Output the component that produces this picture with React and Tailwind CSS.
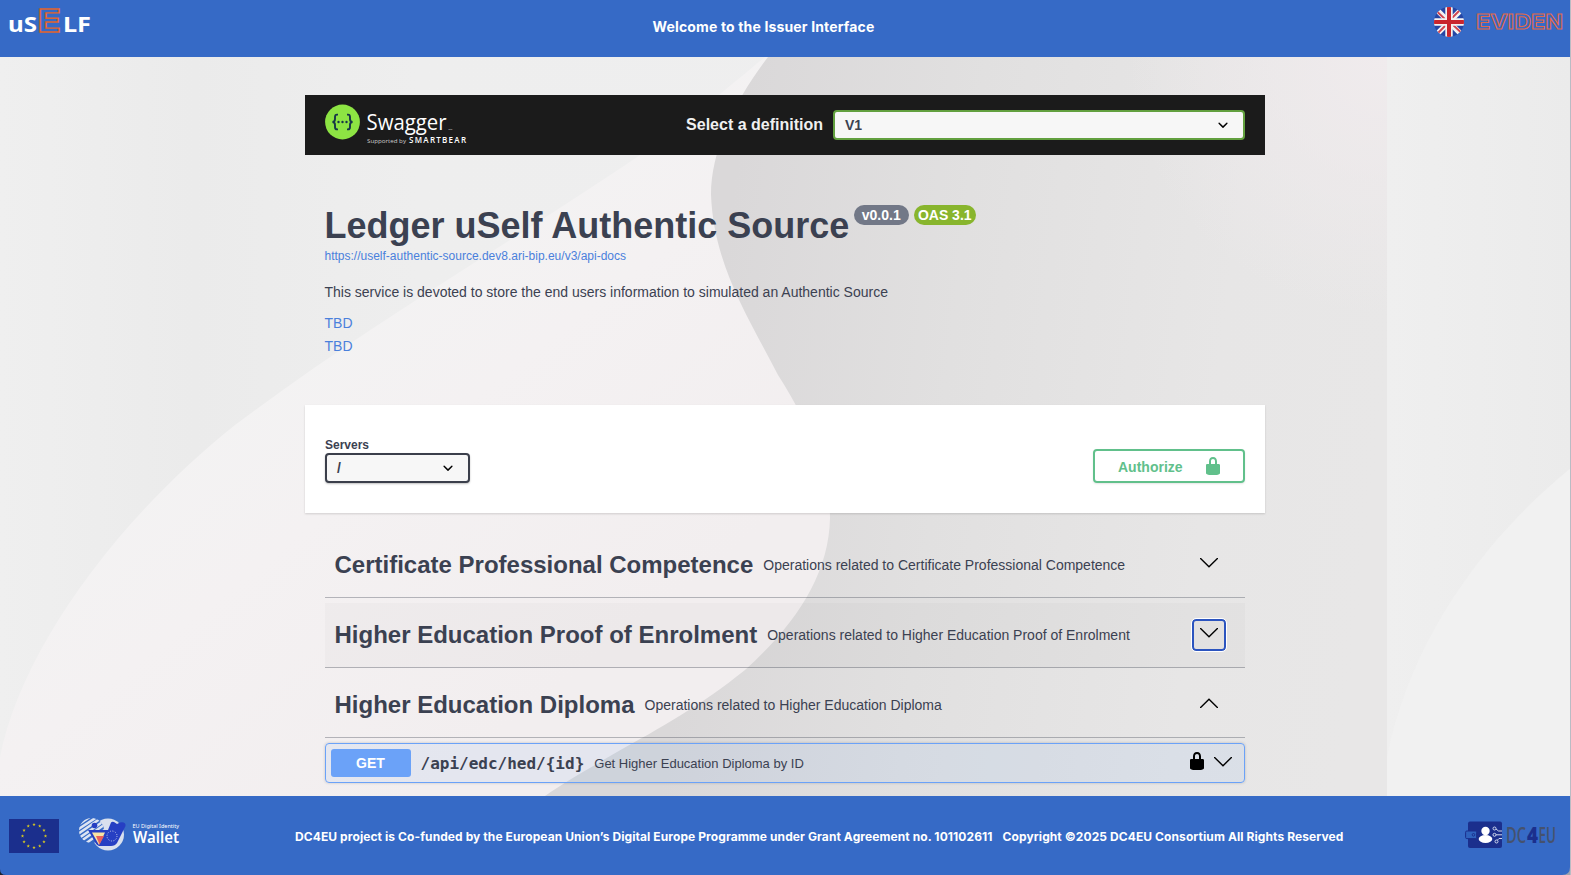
import React from "react";

const Backdrop = () => (
  <svg className="absolute inset-0" width="1571" height="739" viewBox="0 57 1571 739" aria-hidden="true">
    <defs>
      <linearGradient id="page" x1="0" x2="1" y1="0" y2="0">
        <stop offset="0" stopColor="#efefef" />
        <stop offset="0.14" stopColor="#ebebeb" />
        <stop offset="0.3" stopColor="#eeeeee" />
        <stop offset="1" stopColor="#efeff0" />
      </linearGradient>
      <linearGradient id="lobe" gradientUnits="userSpaceOnUse" x1="330" y1="270" x2="620" y2="640">
        <stop offset="0" stopColor="#f3f3f3" />
        <stop offset="0.4" stopColor="#f4f1f2" />
        <stop offset="1" stopColor="#f2eeef" />
      </linearGradient>
      <linearGradient id="stone" gradientUnits="userSpaceOnUse" x1="720" y1="300" x2="1387" y2="380">
        <stop offset="0" stopColor="#dad8d9" />
        <stop offset="0.35" stopColor="#e1e0e0" />
        <stop offset="0.75" stopColor="#e7e6e6" />
        <stop offset="1" stopColor="#e8e7e7" />
      </linearGradient>
      <radialGradient id="corner" gradientUnits="userSpaceOnUse" cx="1387" cy="57" r="260">
        <stop offset="0" stopColor="#f0ebed" />
        <stop offset="1" stopColor="#f0ebed" stopOpacity="0" />
      </radialGradient>
      <linearGradient id="side" x1="0" x2="1" y1="0" y2="0">
        <stop offset="0" stopColor="#efefef" />
        <stop offset="1" stopColor="#ebebeb" />
      </linearGradient>
    </defs>
    <rect y="57" width="1387" height="739" fill="url(#page)" />
    <path d="M0 757C20 655 110 525 235 425C375 320 500 250 640 155C690 120 725 90 765 57H900V796H0Z" fill="url(#lobe)" />
    <path d="M768 57C735 100 711 150 711 195C714 265 747 315 778 375C813 430 830 475 830 518C829 575 795 625 745 670C700 706 660 728 617 752C590 768 565 782 545 796H1387V57Z" fill="url(#stone)" />
    <rect x="1100" y="57" width="287" height="280" fill="url(#corner)" />
    <rect x="1387" y="57" width="184" height="739" fill="url(#side)" />
    <path d="M1387 757C1407 655 1470 550 1571 468V796H1387Z" fill="#f1f1f1" />
  </svg>
);

const Caret = () => (
  <svg width="20" height="20" viewBox="0 0 20 20">
    <path d="M13.418 7.859a.695.695 0 0 1 .978 0 .68.68 0 0 1 0 .969l-3.908 3.83a.697.697 0 0 1-.979 0l-3.908-3.83a.68.68 0 0 1 0-.969.695.695 0 0 1 .978 0L10 11l3.418-3.141z" fill="#000" />
  </svg>
);

const Chevron = ({ up }) => (
  <svg className={up ? "rotate-180" : ""} width="18" height="10" viewBox="0 0 18 10">
    <path d="M.6.6 9 8.7 17.4.6" fill="none" stroke="#000" strokeWidth="1.4" strokeLinecap="round" />
  </svg>
);

const Lock = () => (
  <svg width="20" height="20" viewBox="0 0 20 20" fill="currentColor">
    <path d="M15.8 8H14V5.6C14 2.703 12.665 1 10 1 7.334 1 6 2.703 6 5.6V8H4c-.553 0-1 .646-1 1.199V17c0 .549.428 1.139.951 1.307l1.197.387C5.672 18.861 6.55 19 7.1 19h5.8c.549 0 1.428-.139 1.951-.307l1.196-.387c.524-.167.953-.757.953-1.306V9.199C17 8.646 16.352 8 15.8 8zM12 8H8V5.199C8 3.754 8.797 3 10 3c1.203 0 2 .754 2 2.199V8z" />
  </svg>
);

const USelfLogo = () => (
  <svg className="overflow-visible" width="100" height="40" viewBox="0 0 100 40" fontFamily="'Noto Sans', sans-serif" fontWeight="700">
    <text x="8" y="32" fontSize="22" fill="#fff" textLength="29" lengthAdjust="spacingAndGlyphs">uS</text>
    <text x="37.5" y="31.500" fontFamily="Inter, sans-serif" fontSize="31" fill="none" stroke="#dd6530" strokeWidth="1.400" textLength="23.500" lengthAdjust="spacingAndGlyphs">E</text>
    <text x="63" y="32" fontSize="22" fill="#fff" textLength="28" lengthAdjust="spacingAndGlyphs">LF</text>
  </svg>
);

const UkFlag = () => (
  <svg width="30" height="30" viewBox="0 0 30 30">
    <clipPath id="disc"><circle cx="15" cy="15" r="15" /></clipPath>
    <g clipPath="url(#disc)">
      <rect width="30" height="30" fill="#2546a5" />
      <path d="M0 0 30 30M30 0 0 30" stroke="#f3f1f1" strokeWidth="5.4" />
      <path d="M3 4.5 14 15M16 15 27 25.5M14 16 4 26M15.5 13.5 25.5 3.5" stroke="#d0444f" strokeWidth="1.8" />
      <path d="M15 0V30M0 15H30" stroke="#f3f1f1" strokeWidth="7.4" />
      <path d="M15 0V30M0 15H30" stroke="#c9252d" strokeWidth="4" />
    </g>
  </svg>
);

const EvidenLogo = () => (
  <svg className="overflow-visible" width="94" height="30" viewBox="0 0 94 30">
    <text x="5" y="22" fontFamily="Inter, sans-serif" fontWeight="700" fontSize="20.5" fill="none" stroke="#e0694a" strokeWidth="1" textLength="87" lengthAdjust="spacingAndGlyphs">EVIDEN</text>
  </svg>
);

const SwaggerLogo = () => (
  <svg width="145" height="60" viewBox="0 0 145 60" fill="#fff">
    <circle cx="17.5" cy="27" r="17.4" fill="#8de443" />
    <g fill="none" stroke="#173647" strokeWidth="1.9">
      <path d="M13 19.6H12C10.4 19.6 10 20.5 10 22V24C10 26 9.2 27 7.4 27C9.2 27 10 28 10 30V32C10 33.5 10.4 34.4 12 34.4H13" />
      <path d="M22 19.6H23C24.6 19.6 25 20.5 25 22V24C25 26 25.8 27 27.6 27C25.8 27 25 28 25 30V32C25 33.5 24.6 34.4 23 34.4H22" />
    </g>
    <g fill="#173647"><circle cx="13.5" cy="27" r="1.2" /><circle cx="17.5" cy="27" r="1.2" /><circle cx="21.5" cy="27" r="1.2" /></g>
    <text x="41.500" y="34.5" fontFamily="'Open Sans', sans-serif" fontSize="22.500" textLength="80" lengthAdjust="spacingAndGlyphs">Swagger</text>
    <text x="123.500" y="34.5" fontFamily="'Open Sans', sans-serif" fontSize="2.500">TM</text>
    <text x="42" y="48" fontFamily="'Open Sans', sans-serif" fontSize="6" textLength="39" lengthAdjust="spacingAndGlyphs" fill="#ccc">Supported by</text>
    <text x="84" y="48" fontFamily="'Open Sans', sans-serif" fontWeight="600" fontSize="8" textLength="57">SMARTBEAR</text>
  </svg>
);

const EuFlag = () => (
  <svg width="50" height="34" viewBox="0 0 50 34">
    <rect width="50" height="34" fill="#1b2f8d" />
    {Array.from({ length: 12 }, (_, i) => {
      const a = (i * Math.PI) / 6;
      return (
        <path
          key={i}
          transform={`translate(${25 + 11.5 * Math.sin(a)} ${17 - 11.5 * Math.cos(a)})`}
          d="M0-1.7.45-.5 1.7-.5.7.3 1 1.5 0 .8-1 1.5-.7.3-1.7-.5-.45-.5Z"
          fill="#d9c91f"
        />
      );
    })}
  </svg>
);

const WalletLogo = () => (
  <svg className="overflow-visible" width="104" height="36" viewBox="0 0 104 36">
    <clipPath id="stripes"><circle cx="12.5" cy="13.5" r="12.5" /></clipPath>
    <circle cx="29" cy="17.5" r="16" fill="#d9e0ee" />
    <g clipPath="url(#stripes)">
      <rect width="26" height="27" fill="#366ac6" />
      <path d="M-4 10 18-5M-4 14.5 24-4M-4 19 28-3M-3 23 28 2M0 25.5 28 6M6 27 28 11" stroke="#dde4f2" strokeWidth="2.5" />
    </g>
    <path d="M9 13H29L32 5.500Q33 4.500 35 5L38 7L41 5.500Q47 4.500 46.500 9L38 26Q36 29 32 29H20Q17 28 15.5 24Z" fill="#263fc3" />
    <circle cx="15.5" cy="8.500" r="2.8" fill="#263fc3" />
    <path d="M13 15.500H26L20 28Z" fill="#f8e3a5" />
    <path d="M17 19H25L20.5 27.500Z" fill="#e9605c" />
    <circle cx="33" cy="19" r="5" fill="none" stroke="#c5cfef" strokeWidth="1" strokeDasharray="1 1.6" />
    <text x="53.5" y="10.5" fill="#fff" fontFamily="'Noto Sans', sans-serif" fontSize="5.5" textLength="46.5" lengthAdjust="spacingAndGlyphs">EU Digital Identity</text>
    <text x="54" y="26" fill="#fff" fontFamily="'Noto Sans', sans-serif" fontWeight="600" fontSize="15.5" textLength="46" lengthAdjust="spacingAndGlyphs">Wallet</text>
  </svg>
);

const Dc4euLogo = () => (
  <svg className="overflow-visible" width="92" height="28" viewBox="0 0 92 28">
    <rect x="3" y="0.5" width="34" height="26.5" rx="2" fill="#1b2f8d" />
    <rect x="0.6" y="10" width="11" height="7.6" rx="1.2" fill="#2f62bd" stroke="#1b2f8d" />
    <circle cx="8.5" cy="13.8" r="1.3" fill="none" stroke="#1b2f8d" />
    <circle cx="20.5" cy="10" r="4.2" fill="#fff" />
    <ellipse cx="20.5" cy="18" rx="6.8" ry="4" fill="#fff" />
    <g fill="none" stroke="#cfd8ee" strokeWidth="1">
      <circle cx="29.5" cy="7.5" r="1.5" /><circle cx="29.5" cy="13.8" r="1.5" /><circle cx="31.5" cy="20.5" r="1.5" />
      <path d="M31 8 33.5 10H37M31 13.8H37M32.5 19 34 17.5H37" />
    </g>
    <g fontFamily="'Open Sans', sans-serif" fontSize="22">
      <text x="41" y="21.5" fill="#45526e" fontWeight="600" textLength="20" lengthAdjust="spacingAndGlyphs">DC</text>
      <text x="62" y="21.5" fill="#1b2f8d" fontWeight="800" textLength="11" lengthAdjust="spacingAndGlyphs">4</text>
      <text x="73.5" y="21.5" fill="#45526e" fontWeight="600" textLength="17.5" lengthAdjust="spacingAndGlyphs">EU</text>
    </g>
  </svg>
);

const TagRow = ({ title, text, hover, up, focus }) => (
  <div className={"flex h-[65px] items-center border-b border-[#3b4151]/35 pl-[9.5px] " + (hover ? "bg-black/[0.02]" : "")}>
    <h2 className="text-2xl font-bold whitespace-nowrap">{title}</h2>
    <p className="ml-[10px] flex-1 text-sm whitespace-nowrap">{text}</p>
    <button
      className={
        "mr-[19px] flex h-8 w-[34px] justify-center rounded-[4px] pt-[7px] " +
        (focus ? "border-2 border-[#2b54bf] outline-[1px] outline-white" : "border-2 border-transparent")
      }
    >
      <Chevron up={up} />
    </button>
  </div>
);

export default function App() {
  return (
    <div className="flex h-[875px] w-[1571px] overflow-hidden bg-[#b9bcc4] font-['Liberation_Sans',Arial,sans-serif] text-[#3b4151]">
      <div className="relative flex w-[1570px] flex-col">
        <header className="flex h-[57px] shrink-0 items-start bg-[#366ac6]">
          <div className="w-[652.5px]"><USelfLogo /></div>
          <h1 className="flex-1 pt-[17px] font-['Inter',sans-serif] text-sm leading-5 font-bold tracking-[0.15px] whitespace-nowrap text-white">
            Welcome to the Issuer Interface
          </h1>
          <div className="flex pt-[7px]">
            <UkFlag />
            <div className="pl-[7px]"><EvidenLogo /></div>
            <div className="w-[5px]" />
          </div>
        </header>

        <main className="relative h-[739px] shrink-0 overflow-hidden">
          <Backdrop />
          <div className="relative ml-[305px] w-[960px] pt-[38px]">
            <div className="flex h-[60px] items-center bg-[#1b1b1b] px-5">
              <SwaggerLogo />
              <label className="ml-auto text-base font-bold text-[#f0f0f0]">Select a definition</label>
              <div className="ml-[10px] flex h-[30px] w-[412px] items-center justify-between rounded-[4px] border-2 border-[#62a03f] bg-[#f7f7f7] pr-[10px] pl-[10px]">
                <span className="text-sm font-bold">V1</span>
                <Caret />
              </div>
            </div>

            <section className="h-[250px] pt-[50px] pr-5 pl-[19.5px]">
              <div className="flex h-[42px] items-start">
                <h2 className="text-[36px] leading-[42px] font-bold whitespace-nowrap">Ledger uSelf Authentic Source</h2>
                <span className="ml-[4.500px] h-5 w-[55px] rounded-full bg-[#727887] text-center text-sm leading-5 font-bold text-white">v0.0.1</span>
                <span className="ml-[5px] h-5 w-[62px] rounded-full bg-[#88b52d] text-center text-sm leading-5 font-bold whitespace-nowrap text-white">OAS 3.1</span>
              </div>
              <a className="mt-[1px] block text-xs leading-4 text-[#4a80dc]">https://uself-authentic-source.dev8.ari-bip.eu/v3/api-docs</a>
              <p className="mt-[18px] text-sm leading-5">This service is devoted to store the end users information to simulated an Authentic Source</p>
              <a className="mt-[10px] block text-sm leading-[23px] text-[#4a80dc]">TBD</a>
              <a className="block text-sm leading-[23px] text-[#4a80dc]">TBD</a>
            </section>

            <section className="flex h-[108px] justify-between bg-white px-5 shadow-[0_1px_2px_rgba(0,0,0,0.15)]">
              <div className="pt-8">
                <div className="h-4 text-xs leading-4 font-bold">Servers</div>
                <div className="flex h-[30px] w-[145px] items-center justify-between rounded-[4px] border-2 border-[#3b3f4b] bg-[#f7f7f7] pr-[10px] pl-[10px] shadow-[0_1px_2px_rgba(0,0,0,0.25)]">
                  <span className="text-sm font-semibold">/</span>
                  <Caret />
                </div>
              </div>
              <button className="mt-11 flex h-[34px] w-[152px] items-center justify-between rounded-[4px] border-2 border-[#61c08b] pr-[20px] pl-[23px] text-[#61c08b] shadow-[0_1px_2px_rgba(0,0,0,0.1)]">
                <span className="pt-[2px] text-sm font-bold">Authorize</span>
                <Lock />
              </button>
            </section>

            <section className="flex flex-col gap-[5px] px-5 pt-5">
              <TagRow title="Certificate Professional Competence" text="Operations related to Certificate Professional Competence" />
              <TagRow title="Higher Education Proof of Enrolment" text="Operations related to Higher Education Proof of Enrolment" hover focus />
              <TagRow title="Higher Education Diploma" text="Operations related to Higher Education Diploma" up />
              <div className="flex h-10 items-center rounded-[4px] border border-[#6ba2f8] bg-[#6ba2f8]/10 pr-3 pl-[5px] shadow-[0_0_3px_rgba(0,0,0,0.19)]">
                <span className="h-7 w-20 rounded-[3px] bg-[#6ba2f8] pr-px text-center text-sm leading-7 font-bold text-white">GET</span>
                <span className="pt-px pl-[9.500px] font-['DejaVu_Sans_Mono',monospace] text-base font-semibold whitespace-nowrap">{"/api/edc/hed/{id}"}</span>
                <span className="flex-1 pt-px pl-[10px] text-[13px]">Get Higher Education Diploma by ID</span>
                <span className="-mt-[5px] mr-[7px] text-black"><Lock /></span>
                <span className="-mt-[3px] flex"><Chevron /></span>
              </div>
            </section>
          </div>
        </main>

        <footer className="flex h-[79px] items-start overflow-hidden bg-[#366ac6]">
          <div className="pt-[23px] pl-[9px]"><EuFlag /></div>
          <div className="w-[236px] pt-[21px] pl-5"><WalletLogo /></div>
          <p className="flex flex-1 gap-[10px] pt-[31px] font-['Inter',sans-serif] text-xs leading-5 font-bold tracking-[0.088px] whitespace-nowrap text-white">
            <span>DC4EU project is Co-funded by the European Union’s Digital Europe Programme under Grant Agreement no. 101102611</span>
            <span>Copyright ©2025 DC4EU Consortium All Rights Reserved</span>
          </p>
          <div className="pt-[25px] pr-[13px]"><Dc4euLogo /></div>
        </footer>
        <svg className="absolute bottom-0 left-0" width="6" height="6"><path d="M0 0Q0 6 6 6H0Z" fill="#1c2230" /></svg>
        <svg className="absolute right-0 bottom-0" width="8" height="8"><path d="M8 0Q8 8 0 8H8Z" fill="#9fa4b0" /></svg>
      </div>
    </div>
  );
}
